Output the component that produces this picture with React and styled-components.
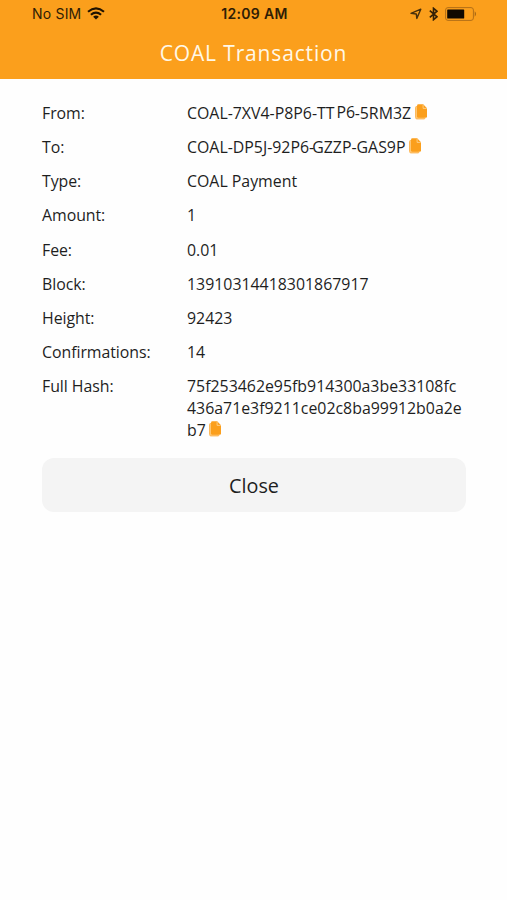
import React from "react";
import styled, { createGlobalStyle } from "styled-components";

const GlobalStyle = createGlobalStyle`
  * { box-sizing: border-box; }
  body { margin: 0; background: #fefefe; }
`;

const Screen = styled.div`
  min-height: 100vh;
  background: #fefefe;
  color: #1e1e1e;
  font-family: "Open Sans", "Noto Sans", sans-serif;
`;

const Header = styled.header`
  height: 79px;
  background: #fb9f1c;
`;

const StatusBar = styled.div`
  display: grid;
  grid-template-columns: 1fr auto 1fr;
  align-items: center;
  height: 27px;
  padding: 0 30px 0 32px;
  font-family: Inter, "Liberation Sans", sans-serif;
  color: #2f1d05;
`;

const Carrier = styled.div`
  display: flex;
  align-items: center;
  gap: 6px;
  font-size: 14px;
  letter-spacing: 0.2px;
`;

const Clock = styled.div`
  font-weight: 600;
  font-size: 14px;
  letter-spacing: 0.3px;
  white-space: nowrap;
`;

const Indicators = styled.div`
  display: flex;
  justify-content: flex-end;
  align-items: center;
  gap: 7px;
`;

const Title = styled.h1`
  margin: 0;
  height: 52px;
  line-height: 52px;
  text-align: center;
  font-size: 21px;
  font-weight: 500;
  letter-spacing: 0.85px;
  color: #fff8e8;
`;

const Content = styled.main`
  padding: 22.8px 41px 0 42px;
`;

const Details = styled.dl`
  margin: 0;
  display: grid;
  grid-template-columns: 145px 279px;
  row-gap: 12.2px;
  font-size: 15.88px;
  line-height: 22px;
`;

const Label = styled.dt`
  letter-spacing: -0.05px;
`;

const Value = styled.dd`
  margin: 0;
  white-space: nowrap;
`;

const Kern = styled.span`
  margin-left: ${(p) => p.$space};
  line-height: 0;
  vertical-align: ${(p) => p.$raise || "baseline"};
`;

const CopyIcon = styled.svg`
  width: 12.5px;
  height: 16px;
  margin-left: 3.5px;
  vertical-align: -1px;
`;

const CloseButton = styled.button`
  display: block;
  width: 424px;
  height: 54px;
  margin-top: 16.5px;
  padding: 1px 0 0;
  border: 0;
  border-radius: 12px;
  background: #f4f4f4;
  color: #1e1e1e;
  font: inherit;
  font-size: 19.8px;
`;

const Copy = () => (
  <CopyIcon viewBox="0 0 12.5 16">
    <path d="M2 2.5H1.4Q.6 2.5 .6 3.5V13.5Q.6 14.9 1.8 14.9H9Q10 14.9 10 14" fill="#ffc978" stroke="#fdb450" strokeWidth="1" />
    <path d="M3.5.3H8.2L12 4.3V12.4Q12 13.8 10.7 13.8H3.4Q2 13.8 2 12.4V1.7Q2 .3 3.5.3Z" fill="#fb9f1c" />
    <path d="M8.1.8V4.4H11.7" fill="none" stroke="#ffd79a" strokeWidth=".8" />
  </CopyIcon>
);

const Wifi = () => (
  <svg width="18" height="13" viewBox="0 0 18 13" fill="none" stroke="#201300" strokeWidth="2.1">
    <path d="M1 4.8Q9-1.9 17 4.8M3.9 7.8Q9 3.4 14.1 7.8" />
    <path d="M6.1 9.7Q9 7.3 11.9 9.7L9 12.6Z" fill="#201300" stroke="none" />
  </svg>
);

const Location = () => (
  <svg width="12" height="12" viewBox="0 0 12 12" fill="none" stroke="#48300b" strokeWidth="1.4" strokeLinejoin="round">
    <path d="M1 5.4 10.8 1.2 6.8 10.4 6.3 6Z" />
  </svg>
);

const Bluetooth = () => (
  <svg width="9" height="14" viewBox="0 0 9 14" fill="none" stroke="#332006" strokeWidth="1.6">
    <path d="M.8 3.7 8 9.8 4.5 12.7V1.3L8 4.2.8 10.3" />
  </svg>
);

const Battery = () => (
  <svg width="32" height="14" viewBox="0 0 32 14">
    <rect x=".6" y=".6" width="27.8" height="12.8" rx="2.4" fill="none" stroke="#b36f17" strokeWidth="1" />
    <rect x="2.2" y="2.4" width="17" height="9.2" rx=".7" fill="#100900" />
    <path d="M29.7 4.3Q32.4 7 29.7 9.7Z" fill="#a56614" />
  </svg>
);

const rows = [
  {
    label: "From:",
    value: <>COAL-7XV4-P8P6-TT<Kern $space="2px" $raise="1px">P6</Kern><Kern $space="-0.5px">-5RM3Z</Kern></>,
    copy: true,
  },
  { label: "To:", value: <>COAL-DP5J-92P6-<Kern $space="-2px">GZZP-GAS9P</Kern></>, copy: true },
  { label: "Type:", value: "COAL Payment" },
  { label: "Amount:", value: "1" },
  { label: "Fee:", value: "0.01" },
  { label: "Block:", value: "13910314418301867917" },
  { label: "Height:", value: "92423" },
  { label: "Confirmations:", value: "14" },
  {
    label: "Full Hash:",
    value: <>75f253462e95fb914300a3be33108fc<br />436a71e3f9211ce02c8ba99912b0a2e<br />b7</>,
    copy: true,
  },
];

export default function App() {
  return (
    <Screen>
      <GlobalStyle />
      <Header>
        <StatusBar>
          <Carrier>No SIM <Wifi /></Carrier>
          <Clock>12:09 AM</Clock>
          <Indicators><Location /><Bluetooth /><Battery /></Indicators>
        </StatusBar>
        <Title>COAL Transaction</Title>
      </Header>
      <Content>
        <Details>
          {rows.map(({ label, value, copy }) => (
            <React.Fragment key={label}>
              <Label>{label}</Label>
              <Value>{value}{copy && <Copy />}</Value>
            </React.Fragment>
          ))}
        </Details>
        <CloseButton>Close</CloseButton>
      </Content>
    </Screen>
  );
}
